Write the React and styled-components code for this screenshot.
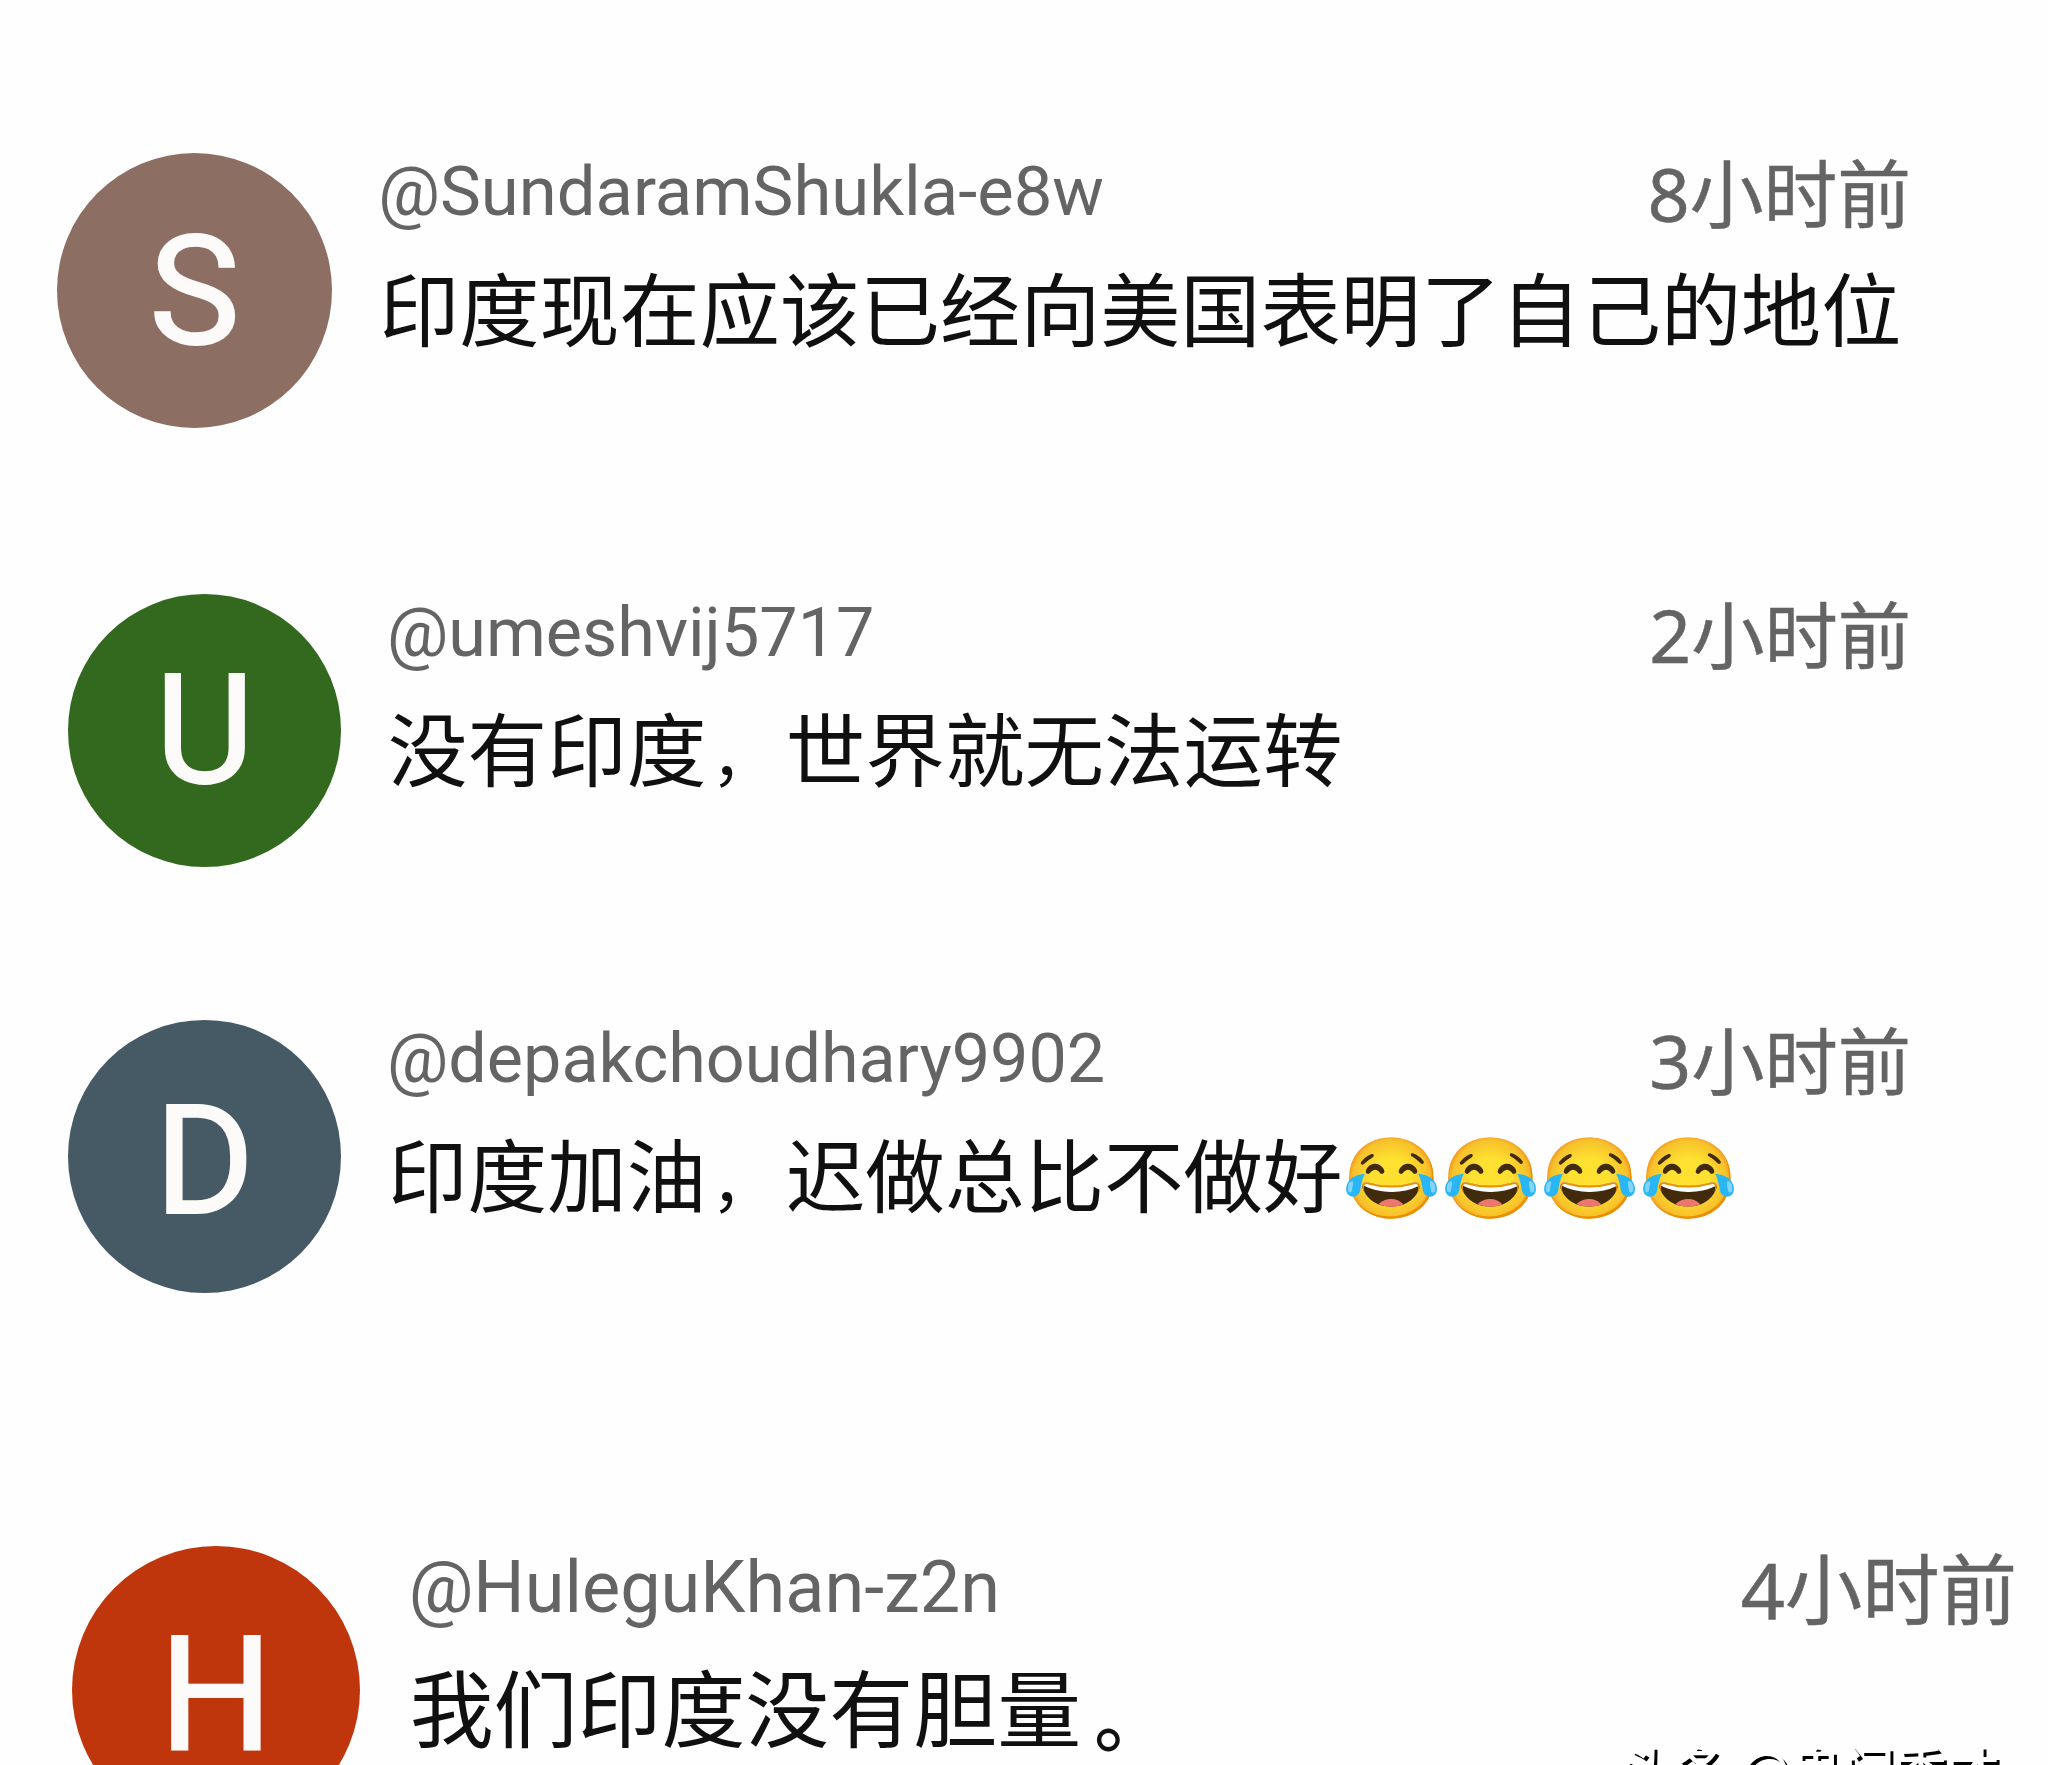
import React from 'react';
import styled, { createGlobalStyle } from 'styled-components';

const GlobalStyle = createGlobalStyle`
  body {
    margin: 0;
    background-color: #fefefe;
  }
`;

const Page = styled.main`
  box-sizing: border-box;
  width: 2048px;
  height: 1765px;
  padding-top: 152.5px;
  overflow: hidden;
  position: relative;
  font-family: Roboto, "Noto Sans CJK SC", sans-serif;
`;

// every size inside a comment is in em, so one font-size scales the row
const Comment = styled.article`
  display: flex;
  align-items: flex-start;
  box-sizing: border-box;
  font-size: ${props => props.$unit}px;
  height: ${props => props.$height}px;
  padding-left: ${props => props.$left}px;
  padding-right: ${props => props.$right}px;
`;

const Avatar = styled.div`
  box-sizing: border-box;
  display: flex;
  align-items: center;
  justify-content: center;
  flex-shrink: 0;
  width: 27.4em;
  height: 27.4em;
  margin-right: 4.6em;
  border-radius: 50%;
  background-color: ${props => props.$color};
`;

const Initial = styled.span`
  color: #fdfbfa;
  font-size: 15.2em;
  line-height: 1;
  padding-top: ${props => props.$drop}em;
  -webkit-text-stroke: 2px #fdfbfa;
`;

const Content = styled.div`
  flex: 1;
  min-width: 0;
`;

const Header = styled.header`
  display: flex;
  justify-content: space-between;
  height: 7.8em;
  margin-bottom: 2.4em;
  color: #646464;
  white-space: nowrap;
`;

const Author = styled.span`
  font-size: 6.85em;
  line-height: 1.139;
  padding-top: 0.012em;
`;

const Time = styled.time`
  font-family: "Noto Sans", "Noto Sans CJK SC", sans-serif;
  font-size: 7.35em;
  line-height: 1;
  padding-top: 0.06em;
  -webkit-text-stroke: 0.5px #646464;
`;

const Text = styled.p`
  margin: 0;
  padding-left: 1px;
  color: #101010;
  font-family: "Noto Sans CJK SC", "Noto Color Emoji", sans-serif;
  font-size: 7.98em;
  line-height: 1.25;
  white-space: nowrap;
`;

// punctuation is drawn smaller than the characters but keeps a full cell
const Comma = styled.span`
  display: inline-block;
  box-sizing: border-box;
  width: 1.25em;
  padding-left: 0.08em;
  font-size: 0.8em;
  line-height: 1;
`;

const FullStop = styled.span`
  display: inline-block;
  box-sizing: border-box;
  width: 1.2em;
  padding-left: 0.18em;
  font-size: 0.87em;
  font-weight: 500;
  line-height: 1;
  vertical-align: -0.06em;
`;

const Watermark = styled.div`
  position: absolute;
  left: 1622px;
  top: 1738px;
  color: #fefefe;
  font-family: "Noto Sans CJK SC", sans-serif;
  font-size: 52.5px;
  font-weight: 500;
  line-height: 60px;
  text-shadow: 3px 3px 0 #000;
  white-space: nowrap;
`;

const comments = [
  {
    author: '@SundaramShukla-e8w',
    time: '8小时前',
    text: '印度现在应该已经向美国表明了自己的地位',
    initial: 'S',
    color: '#8d6e63',
    unit: 10.04,
    height: 441.5,
    left: 57,
    right: 137,
    drop: 0.025
  },
  {
    author: '@umeshvij5717',
    time: '2小时前',
    text: '没有印度，世界就无法运转',
    initial: 'U',
    color: '#33691e',
    unit: 9.97,
    height: 426,
    left: 68,
    right: 137,
    drop: 0.02
  },
  {
    author: '@depakchoudhary9902',
    time: '3小时前',
    text: '印度加油，迟做总比不做好😂😂😂😂',
    initial: 'D',
    color: '#455a64',
    unit: 9.97,
    height: 526,
    left: 68,
    right: 137,
    drop: 0.065
  },
  {
    author: '@HuleguKhan-z2n',
    time: '4小时前',
    text: '我们印度没有胆量。',
    initial: 'H',
    color: '#bf360c',
    unit: 10.52,
    height: 300,
    left: 72,
    right: 31,
    drop: 0.075
  }
];

const renderText = text => text.split(/([，。])/).map((part, index) => {
  if (part === '，') {
    return <Comma key={index}>{part}</Comma>;
  }
  if (part === '。') {
    return <FullStop key={index}>{part}</FullStop>;
  }
  return part;
});

const App = () => (
  <React.Fragment>
    <GlobalStyle />
    <Page>
      {comments.map(item => (
        <Comment
          key={item.author}
          $unit={item.unit}
          $height={item.height}
          $left={item.left}
          $right={item.right}
        >
          <Avatar $color={item.color}>
            <Initial $drop={item.drop}>{item.initial}</Initial>
          </Avatar>
          <Content>
            <Header>
              <Author>{item.author}</Author>
              <Time>{item.time}</Time>
            </Header>
            <Text>{renderText(item.text)}</Text>
          </Content>
        </Comment>
      ))}
      <Watermark>头条 @鬼门秀才</Watermark>
    </Page>
  </React.Fragment>
);

export default App;
